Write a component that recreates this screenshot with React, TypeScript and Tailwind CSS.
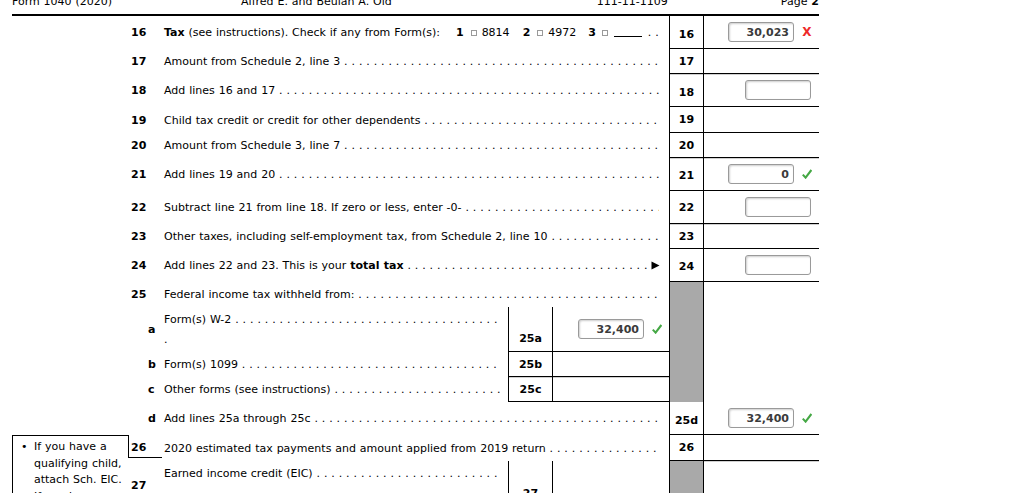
import React from 'react';

const B = 'border-b border-black';
const G = 'border-b border-[#8a8a8a] shadow-[0_1px_0_#d0d0d0]';

function Dots({ cls = '' }: { cls?: string }) {
  return (
    <span className={`flex-1 min-w-0 overflow-hidden whitespace-pre ${cls}`}>{' .'.repeat(160)}</span>
  );
}

function Check() {
  return (
    <svg width="10" height="10" viewBox="0 0 10 10" className="block">
      <path d="M0.8 5.6 L3.6 8.6 L9.4 1" fill="none" stroke="#45a845" strokeWidth="2.1" strokeLinejoin="miter" />
    </svg>
  );
}

function XMark() {
  return <span className="text-[12px] font-bold text-[#ee2a2a] leading-none">X</span>;
}

function Box({ v }: { v?: string }) {
  return (
    <div className="w-[66px] h-[20px] shrink-0 rounded-[3px] border border-[#9a9a9a] bg-white shadow-[inset_1px_1px_2px_rgba(0,0,0,0.2)] flex items-center justify-end pr-[4px] text-[11px] font-bold text-[#3b3b3b] leading-none">
      {v}
    </div>
  );
}

function Val({ v, mark }: { v?: string; mark?: 'ok' | 'x' }) {
  if (mark) {
    return (
      <div className="h-full flex items-center justify-end pr-[7px]">
        <Box v={v} />
        <div className="ml-[8px] w-[10px] flex justify-center">{mark === 'ok' ? <Check /> : <XMark />}</div>
      </div>
    );
  }
  return (
    <div className="h-full flex items-center justify-end pr-[8px]">
      <Box v={v} />
    </div>
  );
}

function Row({
  h,
  num,
  children,
  line,
  val,
  b = B,
  lp = 'pt-0',
}: {
  h: string;
  num: string;
  children: React.ReactNode;
  line: string;
  val?: React.ReactNode;
  b?: string;
  lp?: string;
}) {
  return (
    <div className={`flex ${h}`}>
      <div className="w-[657px] flex items-center pl-[119px] pr-[10px]">
        <div className="w-[33px] shrink-0 font-bold">{num}</div>
        <div className="flex-1 min-w-0 flex items-center">{children}</div>
      </div>
      <div className={`w-[34px] border-l border-black flex items-center justify-center font-bold ${lp} ${b}`}>{line}</div>
      <div className={`w-[116px] border-l border-black ${b}`}>{val}</div>
    </div>
  );
}

function SubRow({
  h,
  letter,
  children,
  line,
  val,
  b = B,
  bottom = false,
}: {
  h: string;
  letter: string;
  children: React.ReactNode;
  line: string;
  val?: React.ReactNode;
  b?: string;
  bottom?: boolean;
}) {
  return (
    <div className={`flex ${h}`}>
      <div className="w-[496px] flex items-center pl-[136px] pr-[8px]">
        <div className="w-[16px] shrink-0 font-bold">{letter}</div>
        <div className="flex-1 min-w-0">{children}</div>
      </div>
      <div
        className={`w-[44px] border-l border-black flex justify-center font-bold ${
          bottom ? 'items-end pb-[6px]' : 'items-center'
        } ${b}`}
      >
        {line}
      </div>
      <div className={`w-[117px] border-l border-black ${b}`}>{val}</div>
    </div>
  );
}

function Sq() {
  return <span className="inline-block w-[6px] h-[6px] border border-[#9a9a9a] bg-white shrink-0" />;
}

function Desc({ text }: { text: React.ReactNode }) {
  return (
    <>
      <span className="whitespace-nowrap">{text}</span>
      <Dots />
    </>
  );
}

export default function App() {
  return (
    <div className="h-[493px] overflow-hidden bg-white text-black font-['DejaVu_Sans',sans-serif] text-[11px] leading-[13px] [word-spacing:0.4px]">
      {/* header */}
      <div className="-mt-[10px] ml-[12px] w-[807px] h-[26px] border-b-2 border-black flex items-end pb-[6px] text-[11px]">
        <span>Form 1040 (2020)</span>
        <span className="ml-[129px]">Alfred E. and Beulah A. Old</span>
        <span className="ml-[205px]">111-11-1109</span>
        <span className="ml-auto">
          Page <b>2</b>
        </span>
      </div>

      <div className="ml-[12px] w-[807px]">
        <Row h="h-[33px]" num="16" line="16" lp="pt-[4px]" val={<Val v="30,023" mark="x" />}>
          <span className="whitespace-nowrap">
            <b>Tax</b> (see instructions). Check if any from Form(s):
          </span>
          <b className="ml-[16px]">1</b>
          <span className="ml-[7px] flex items-center"><Sq /></span>
          <span className="ml-[5px]">8814</span>
          <b className="ml-[13px]">2</b>
          <span className="ml-[7px] flex items-center"><Sq /></span>
          <span className="ml-[5px]">4972</span>
          <b className="ml-[12px]">3</b>
          <span className="ml-[6px] flex items-center"><Sq /></span>
          <span className="ml-[6px] w-[28px] h-[9px] border-b border-black shrink-0" />
          <Dots cls="ml-[2px]" />
        </Row>
        <Row h="h-[25px]" num="17" line="17" b={G}>
          <Desc text="Amount from Schedule 2, line 3" />
        </Row>
        <Row h="h-[33px]" num="18" line="18" lp="pt-[5px]" val={<Val />}>
          <Desc text="Add lines 16 and 17" />
        </Row>
        <Row h="h-[26px]" num="19" line="19">
          <Desc text="Child tax credit or credit for other dependents" />
        </Row>
        <Row h="h-[25px]" num="20" line="20" b={G}>
          <Desc text="Amount from Schedule 3, line 7" />
        </Row>
        <Row h="h-[33px]" num="21" line="21" lp="pt-[2px]" val={<Val v="0" mark="ok" />}>
          <Desc text="Add lines 19 and 20" />
        </Row>
        <Row h="h-[33px]" num="22" line="22" val={<Val />} b={G}>
          <Desc text="Subtract line 21 from line 18. If zero or less, enter -0-" />
        </Row>
        <Row h="h-[25px]" num="23" line="23">
          <Desc text="Other taxes, including self-employment tax, from Schedule 2, line 10" />
        </Row>
        <Row h="h-[33px]" num="24" line="24" lp="pt-[2px]" val={<Val />}>
          <span className="whitespace-nowrap">
            Add lines 22 and 23. This is your <b>total tax</b>
          </span>
          <Dots />
          <svg width="9" height="9" viewBox="0 0 9 9" className="ml-[1px] shrink-0 -mr-[1px]">
            <path d="M0.5 0.5 L8.5 4.5 L0.5 8.5 Z" fill="#000" />
          </svg>
        </Row>

        {/* line 25 block */}
        <div className="flex">
          <div className="w-[657px] flex flex-col">
            <div className="h-[25px] flex items-center pl-[119px] pr-[10px]">
              <div className="w-[33px] shrink-0 font-bold">25</div>
              <div className="flex-1 min-w-0 flex items-center">
                <Desc text="Federal income tax withheld from:" />
              </div>
            </div>
            <SubRow h="h-[45px]" letter="a" line="25a" bottom val={<Val v="32,400" mark="ok" />}>
              <div className="leading-[20px]">
                <div className="flex">
                  <Desc text="Form(s) W-2" />
                </div>
                <div>.</div>
              </div>
            </SubRow>
            <SubRow h="h-[25px]" letter="b" line="25b" b={G}>
              <div className="flex">
                <Desc text="Form(s) 1099" />
              </div>
            </SubRow>
            <SubRow h="h-[25px]" letter="c" line="25c">
              <div className="flex">
                <Desc text="Other forms (see instructions)" />
              </div>
            </SubRow>
            <div className="h-[33px] flex items-center pl-[136px] pr-[10px]">
              <div className="w-[16px] shrink-0 font-bold">d</div>
              <div className="flex-1 min-w-0 flex items-center">
                <Desc text="Add lines 25a through 25c" />
              </div>
            </div>
          </div>
          <div className="w-[34px] border-l border-black flex flex-col">
            <div className="h-[120px] bg-[#a9a9a9]" />
            <div className="h-[33px] border-b border-black flex items-center justify-center pt-[5px] font-bold">25d</div>
          </div>
          <div className="w-[116px] border-l border-black border-b flex flex-col justify-end">
            <div className="h-[32px]">
              <Val v="32,400" mark="ok" />
            </div>
          </div>
        </div>

        {/* lines 26-27 block with sidebar */}
        <div className="flex">
          <div className="w-[116px] h-[71px] border-t border-l border-black pt-[3px] pl-[8px] leading-[16.5px]">
            <div className="flex">
              <span className="w-[13px] shrink-0">•</span>
              <span>
                If you have a<br />
                qualifying child,<br />
                attach Sch. EIC.
              </span>
            </div>
            <div className="flex">
              <span className="w-[13px] shrink-0">•</span>
              <span>
                If you have
                <br />
                nontaxable
              </span>
            </div>
          </div>
          <div className="flex flex-col">
            <div className="flex h-[26px]">
              <div className="w-[541px] flex">
                <div className="w-[34px] h-[23px] border-l border-b border-black pl-[2px] pt-[2px] flex items-center font-bold">26</div>
                <div className="flex-1 min-w-0 flex items-center pl-[2px] pr-[10px]">
                  <Desc text="2020 estimated tax payments and amount applied from 2019 return" />
                </div>
              </div>
              <div className={`w-[34px] border-l border-black flex items-center justify-center font-bold ${G}`}>26</div>
              <div className={`w-[116px] border-l border-black ${G}`} />
            </div>
            <div className="flex h-[45px]">
              <div className="w-[380px] flex items-center">
                <div className="w-[36px] shrink-0 pl-[3px] pt-[4px] font-bold">27</div>
                <div className="flex-1 min-w-0 pr-[8px] leading-[20px]">
                  <div className="flex">
                    <Desc text="Earned income credit (EIC)" />
                  </div>
                  <div>.</div>
                </div>
              </div>
              <div className="w-[44px] border-l border-black flex items-end justify-center pb-[6px] font-bold">27</div>
              <div className="w-[117px] border-l border-black" />
              <div className="w-[34px] border-l border-black bg-[#a9a9a9]" />
              <div className="w-[116px] border-l border-black" />
            </div>
          </div>
        </div>
      </div>
    </div>
  );
}
